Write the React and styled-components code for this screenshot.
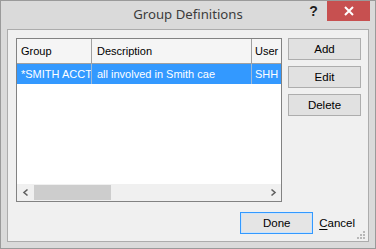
import React from 'react';
import styled, { createGlobalStyle } from 'styled-components';

const GlobalStyle = createGlobalStyle`
  html, body {
    margin: 0;
    padding: 0;
    background: #dadada;
  }
  * { box-sizing: border-box; }
`

const Window = styled.div`
  width: 376px;
  height: 249px;
  border: 1px solid #9a9a9a;
  background: #dadada;
  display: flex;
  flex-direction: column;
  font-family: "Liberation Sans", Arial, sans-serif;
  font-size: 11px;
  color: #000;
  overflow: hidden;
`

const TitleBar = styled.div`
  height: 28px;
  display: grid;
  grid-template-columns: 1fr auto 1fr;
  align-items: start;
`

const Title = styled.div`
  font-family: "Noto Sans", sans-serif;
  font-size: 13.2px;
  color: #3c3c3c;
  line-height: 28px;
  margin-top: -1px;
`

const Controls = styled.div`
  display: flex;
  justify-content: flex-end;
  align-items: flex-start;
`

const HelpBtn = styled.div`
  width: 25px;
  height: 20px;
  display: flex;
  align-items: center;
  justify-content: center;
  font-weight: bold;
  font-size: 14px;
  color: #1e1e1e;
  margin-right: 1px;
`

const CloseBtn = styled.div`
  width: 43px;
  height: 20px;
  background: #c75050;
  margin-right: 5px;
  display: flex;
  align-items: center;
  justify-content: center;
`

const Client = styled.div`
  flex: 1;
  margin: 0 6px 6px 6px;
  border: 1px solid #acacac;
  background: #f0f0f0;
  padding: 8px 6px 7px 8px;
  display: grid;
  grid-template-columns: 266px 1fr;
  grid-template-rows: 164px 1fr;
  column-gap: 6px;
  position: relative;
`

const List = styled.div`
  border: 1px solid #828282;
  background: #fff;
  display: flex;
  flex-direction: column;
  overflow: hidden;
`

const Row = styled.div`
  display: grid;
  grid-template-columns: 75px 160px 40px;
  height: ${p => (p.$header ? '25px' : '20px')};
  background: ${p => (p.$selected ? '#3399ff' : p.$header ? '#f5f5f5' : '#fff')};
  color: ${p => (p.$selected ? '#fff' : '#000')};
  border-bottom: ${p => (p.$header ? '1px solid #a0a0a0' : 'none')};
  white-space: nowrap;
`

const Cell = styled.div`
  padding-left: ${p => p.$pad || '5px'};
  border-right: 1px solid ${p => (p.$header ? '#a0a0a0' : '#9fb8d6')};
  display: flex;
  align-items: center;
  overflow: hidden;
`

const Spacer = styled.div`
  flex: 1;
`

const HScroll = styled.div`
  height: 17px;
  background: #f0f0f0;
  display: flex;
  align-items: center;
`

const Arrow = styled.div`
  width: 17px;
  height: 17px;
  display: flex;
  align-items: center;
  justify-content: center;
`

const Track = styled.div`
  flex: 1;
  height: 15px;
  display: flex;
  align-items: center;
`

const Thumb = styled.div`
  width: 77px;
  height: 15px;
  background: #cdcdcd;
`

const SideButtons = styled.div`
  display: flex;
  flex-direction: column;
  gap: 6px;
  width: 73px;
`

const Button = styled.button`
  width: 73px;
  height: 22px;
  padding: 0 0 1px;
  font-family: inherit;
  font-size: 11.5px;
  color: #000;
  background: ${p => (p.$default ? '#e5e5e5' : '#e1e1e1')};
  border: 1px solid ${p => (p.$default ? '#3399ff' : '#adadad')};
  box-shadow: ${p => (p.$default ? 'inset 0 0 0 1px #cde4fa' : 'none')};
`

const Footer = styled.div`
  grid-column: 1 / 3;
  display: flex;
  justify-content: flex-end;
  align-items: flex-end;
  gap: 6px;
  padding-right: 7px;
`

const LinkBtn = styled.div`
  height: 22px;
  font-size: 11.5px;
  display: flex;
  align-items: center;
  padding-bottom: 1px;
  u { text-decoration-thickness: 1px; text-underline-offset: 2px; }
`

const Grip = styled.svg`
  position: absolute;
  right: 3px;
  bottom: 2px;
`

function Chevron({ dir }) {
  const d = dir === 'left' ? 'M5.5 1.5 L2 4.5 L5.5 7.5' : 'M2.5 1.5 L6 4.5 L2.5 7.5';
  return (
    <svg width="8" height="9" viewBox="0 0 8 9">
      <path d={d} fill="none" stroke="#606060" strokeWidth="1.6" />
    </svg>
  );
}

export default function App() {
  return (
    <>
      <GlobalStyle />
      <Window>
        <TitleBar>
          <div />
          <Title>Group Definitions</Title>
          <Controls>
            <HelpBtn>?</HelpBtn>
            <CloseBtn>
              <svg width="10" height="10" viewBox="0 0 10 10">
                <path d="M1 1 L9 9 M9 1 L1 9" stroke="#fff" strokeWidth="2" />
              </svg>
            </CloseBtn>
          </Controls>
        </TitleBar>
        <Client>
          <List>
            <Row $header>
              <Cell $header $pad="4px">Group</Cell>
              <Cell $header>Description</Cell>
              <Cell $header $pad="3px">User</Cell>
            </Row>
            <Row $selected>
              <Cell $pad="4px">*SMITH ACCT</Cell>
              <Cell>all involved in Smith cae</Cell>
              <Cell $pad="3px">SHH</Cell>
            </Row>
            <Spacer />
            <HScroll>
              <Arrow><Chevron dir="left" /></Arrow>
              <Track><Thumb /></Track>
              <Arrow><Chevron dir="right" /></Arrow>
            </HScroll>
          </List>
          <SideButtons>
            <Button>Add</Button>
            <Button>Edit</Button>
            <Button>Delete</Button>
          </SideButtons>
          <Footer>
            <Button $default>Done</Button>
            <LinkBtn><span><u>C</u>ancel</span></LinkBtn>
          </Footer>
          <Grip width="8" height="8" viewBox="0 0 8 8">
            <g fill="#b8b8b8">
              <rect x="6" y="0" width="2" height="2" />
              <rect x="3" y="3" width="2" height="2" />
              <rect x="6" y="3" width="2" height="2" />
              <rect x="0" y="6" width="2" height="2" />
              <rect x="3" y="6" width="2" height="2" />
              <rect x="6" y="6" width="2" height="2" />
            </g>
          </Grip>
        </Client>
      </Window>
    </>
  );
}
